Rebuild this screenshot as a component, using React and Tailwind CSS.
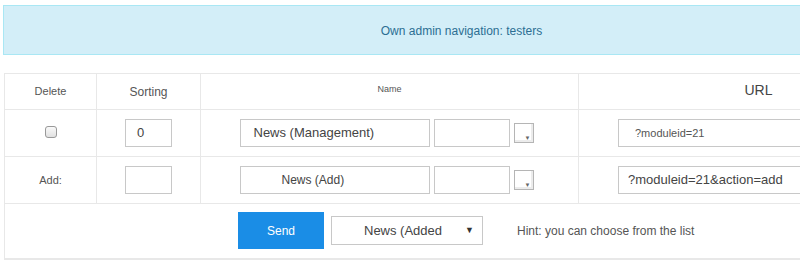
import React from 'react';

const ColorPick = () => (
  <div className="relative w-[20px] h-[20px] border border-[#b5b5b5] bg-white shadow-[inset_-1px_-1px_0_1px_#ececec]">
    <span className="absolute right-[2px] bottom-[1px] text-[6px] leading-none text-[#666]">▼</span>
  </div>
);

const Cell = ({ children, className = '' }) => (
  <td className={`border border-[#e8e8e8] align-middle ${className}`}>{children}</td>
);

const App = () => {
  return (
    <div className="w-[800px] h-[260px] overflow-hidden bg-white font-['Liberation_Sans',Arial,sans-serif]">
      <div className="w-[940px] pt-[5px] pl-[3px]">
        <div className="h-[50px] border border-[#a9e7f4] bg-[#d3eef8] flex items-center justify-center pr-[4px]">
          <span className="text-[12px] text-[#2c6e93] ml-[-16px] mt-[2px]">Own admin navigation: testers</span>
        </div>

        <table className="mt-[18px] ml-[1px] border-collapse table-fixed w-[934px] text-[#555]">
          <colgroup>
            <col className="w-[92px]" />
            <col className="w-[104px]" />
            <col className="w-[378px]" />
            <col className="w-[360px]" />
          </colgroup>
          <tbody>
            <tr className="h-[36px]">
              <Cell className="text-center text-[11px]">Delete</Cell>
              <Cell className="text-center text-[12px]">Sorting</Cell>
              <Cell className="text-center text-[9px] pb-[3px]">Name</Cell>
              <Cell className="text-center text-[14px] text-[#444] pb-[3px]">URL</Cell>
            </tr>
            <tr className="h-[47px]">
              <Cell className="text-center">
                <div className="mx-auto w-[12px] h-[12px] rounded-[3px] border border-[#999] bg-gradient-to-b from-[#fafafa] to-[#e1e1e1] -mt-[3px]" />
              </Cell>
              <Cell>
                <div className="mx-auto w-[47px] h-[28px] border border-[#c8c8c8] flex items-center pl-[11px] text-[13px] text-[#444]">0</div>
              </Cell>
              <Cell>
                <div className="flex items-center justify-center gap-[4px] pr-[6px]">
                  <div className="w-[190px] h-[28px] border border-[#c8c8c8] flex items-center pl-[13px] text-[13px] text-[#444]">News (Management)</div>
                  <div className="w-[76px] h-[28px] border border-[#c8c8c8]" />
                  <ColorPick />
                </div>
              </Cell>
              <Cell className="pl-[39px]">
                <div className="w-[280px] h-[28px] border border-[#c8c8c8] flex items-center pl-[16px] text-[11px] text-[#555]">?moduleid=21</div>
              </Cell>
            </tr>
            <tr className="h-[47px]">
              <Cell className="text-center text-[11px]">Add:</Cell>
              <Cell>
                <div className="mx-auto w-[47px] h-[28px] border border-[#c8c8c8]" />
              </Cell>
              <Cell>
                <div className="flex items-center justify-center gap-[4px] pr-[6px]">
                  <div className="w-[190px] h-[28px] border border-[#c8c8c8] flex items-center pl-[41px] text-[12px] text-[#444]">News (Add)</div>
                  <div className="w-[76px] h-[28px] border border-[#c8c8c8]" />
                  <ColorPick />
                </div>
              </Cell>
              <Cell className="pl-[39px]">
                <div className="w-[280px] h-[28px] border border-[#c8c8c8] flex items-center pl-[9px] text-[13px] text-[#444]">?moduleid=21&amp;action=add</div>
              </Cell>
            </tr>
            <tr className="h-[55px]">
              <td colSpan={4} className="border border-[#e8e8e8] border-b-2 align-middle">
                <div className="flex items-center pl-[233px]">
                  <div className="w-[86px] h-[37px] bg-[#1a8de6] text-white text-[12px] flex items-center justify-center">Send</div>
                  <div className="ml-[7px] w-[152px] h-[29px] border border-[#c8c8c8] flex items-center pl-[32px] pr-[8px] text-[13px] text-[#444]">
                    <span className="flex-1">News (Added</span>
                    <span className="text-[9px] text-[#333]">▼</span>
                  </div>
                  <span className="ml-[34px] text-[12px] text-[#555]">Hint: you can choose from the list</span>
                </div>
              </td>
            </tr>
          </tbody>
        </table>
      </div>
    </div>
  );
};

export default App;
